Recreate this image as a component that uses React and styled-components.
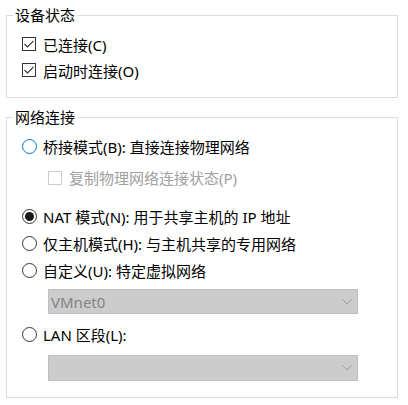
import React from 'react';
import styled, { createGlobalStyle } from 'styled-components';

const GlobalStyle = createGlobalStyle`
    html, body {
        margin: 0;
        padding: 0;
        background: #ffffff;
    }
    body {
        font-family: "Noto Sans", "Noto Sans CJK SC", sans-serif;
        font-size: 15px;
        color: #000;
    }
`;

const Page = styled.div`
    width: 408px;
    height: 405px;
    overflow: hidden;
`;

const Group = styled.fieldset`
    margin: ${p => p.$top}px 10px 0 6px;
    padding: 0;
    border: 1px solid #dcdcdc;
    min-width: 0;
`;

const Legend = styled.legend`
    margin-left: 6px;
    padding: 0 2px;
    line-height: 20px;
    font-size: 15px;
`;

const Body = styled.div`
    padding: ${p => p.$pad};
    display: flex;
    flex-direction: column;
`;

const Row = styled.label`
    display: flex;
    align-items: center;
    height: ${p => p.$h || 27}px;
    margin-top: ${p => p.$mt || 0}px;
    margin-left: ${p => p.$indent || 0}px;
    color: ${p => (p.$disabled ? '#a0a0a0' : '#000')};
    white-space: nowrap;
`;

const Box = styled.span`
    width: 14px;
    height: 14px;
    box-sizing: border-box;
    border: 1px solid ${p => (p.$disabled ? '#cccccc' : '#333333')};
    background: #fff;
    margin-right: 7px;
    display: flex;
    align-items: center;
    justify-content: center;
    flex-shrink: 0;
`;

const Radio = styled.span`
    width: 15px;
    height: 15px;
    box-sizing: border-box;
    border-radius: 50%;
    border: 1px solid ${p => (p.$focus ? '#0078d7' : '#333333')};
    background: #fff;
    margin-right: 6px;
    display: flex;
    align-items: center;
    justify-content: center;
    flex-shrink: 0;
`;

const Dot = styled.span`
    width: 9px;
    height: 9px;
    border-radius: 50%;
    background: #1a1a1a;
`;

const Select = styled.div`
    margin: ${p => p.$mt}px 0 0 26px;
    width: 310px;
    height: ${p => p.$h}px;
    box-sizing: border-box;
    background: #cccccc;
    border: 1px solid #bfbfbf;
    display: flex;
    align-items: center;
    justify-content: space-between;
    padding: 0 5px 0 2px;
    color: #838383;
    font-size: 15px;
`;

const Check = () => (
    <svg width="12" height="12" viewBox="0 0 12 12">
        <path d="M1.5 6 L4.5 9 L10.5 2.8" fill="none" stroke="#333" strokeWidth="1.1" />
    </svg>
);

const Chevron = () => (
    <svg width="10" height="6" viewBox="0 0 10 6">
        <path d="M0.5 0.5 L5 5 L9.5 0.5" fill="none" stroke="#9a9a9a" strokeWidth="1" />
    </svg>
);

const App = () => {
    return (
        <Page>
            <GlobalStyle />
            <Group $top={5}>
                <Legend>设备状态</Legend>
                <Body $pad="6px 0 14px 15px">
                    <Row $h={26}><Box><Check /></Box>已连接(C)</Row>
                    <Row $h={26}><Box><Check /></Box>启动时连接(O)</Row>
                </Body>
            </Group>
            <Group $top={9}>
                <Legend>网络连接</Legend>
                <Body $pad="6px 0 16px 15px">
                    <Row><Radio $focus />桥接模式(B): 直接连接物理网络</Row>
                    <Row $mt={4} $indent={26} $disabled><Box $disabled />复制物理网络连接状态(P)</Row>
                    <Row $mt={12}><Radio><Dot /></Radio>NAT 模式(N): 用于共享主机的 IP 地址</Row>
                    <Row><Radio />仅主机模式(H): 与主机共享的专用网络</Row>
                    <Row><Radio />自定义(U): 特定虚拟网络</Row>
                    <Select $mt={5} $h={25}><span>VMnet0</span><Chevron /></Select>
                    <Row $mt={7}><Radio />LAN 区段(L):</Row>
                    <Select $mt={7} $h={26}><span></span><Chevron /></Select>
                </Body>
            </Group>
        </Page>
    );
};

export default App;
